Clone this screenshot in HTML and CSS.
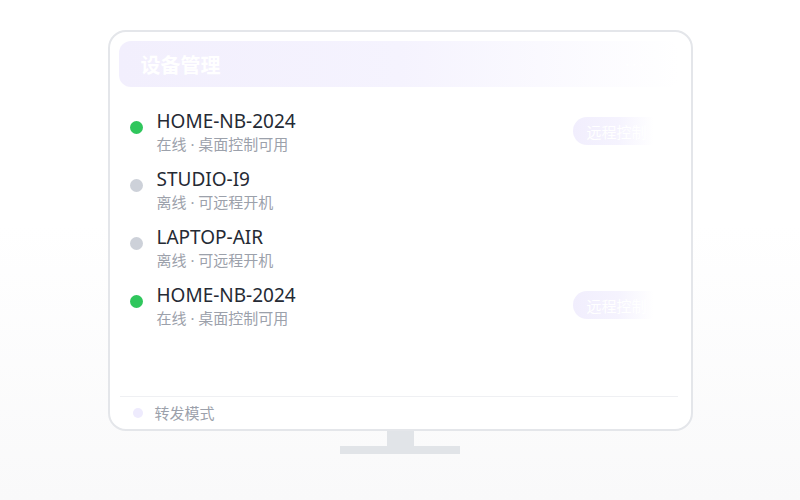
FILE: index.html
```
<!DOCTYPE html>
<html lang="zh-CN">
  <head>
    <meta charset="UTF-8" />
    <meta name="viewport" content="width=device-width, initial-scale=1.0" />
    <title>设备管理</title>
    <link rel="stylesheet" href="styles.css">
  </head>
  <body>
    <div class="monitor">
      <div class="screen">
        <div class="header">
          <span class="title">设备管理</span>
          <span class="more">···</span>
        </div>

        <div class="device-list">
          <div class="device">
            <span class="dot online"></span>
            <div class="info">
              <div class="name">HOME-NB-2024</div>
              <div class="status">在线 · 桌面控制可用</div>
            </div>
            <button class="remote-btn">远程控制</button>
          </div>
          <div class="device">
            <span class="dot"></span>
            <div class="info">
              <div class="name">STUDIO-I9</div>
              <div class="status">离线 · 可远程开机</div>
            </div>
          </div>
          <div class="device">
            <span class="dot"></span>
            <div class="info">
              <div class="name">LAPTOP-AIR</div>
              <div class="status">离线 · 可远程开机</div>
            </div>
          </div>
          <div class="device">
            <span class="dot online"></span>
            <div class="info">
              <div class="name">HOME-NB-2024</div>
              <div class="status">在线 · 桌面控制可用</div>
            </div>
            <button class="remote-btn">远程控制</button>
          </div>
        </div>

        <div class="footer">
          <span class="mode-dot"></span>
          <span>转发模式</span>
        </div>
      </div>
      <div class="neck"></div>
      <div class="base"></div>
    </div>
  </body>
</html>
```

FILE: styles.css
```
body {
  margin: 0;
  padding: 0;
  height: 500px;
  font-family: "Noto Sans", "Noto Sans CJK SC", sans-serif;
  background: linear-gradient(#ffffff 45%, #f9f9fa);
}

.monitor {
  display: flex;
  flex-direction: column;
  align-items: center;
  padding-top: 30px;
}

.screen {
  box-sizing: border-box;
  width: 585px;
  height: 401px;
  border: 2px solid #e4e6ea;
  border-radius: 18px;
  background-color: #fff;
  padding: 9px 11px 0 9px;
  display: flex;
  flex-direction: column;
}

.header {
  height: 46px;
  border-radius: 12px;
  background: linear-gradient(90deg, #f2effd 0%, #f5f3fe 50%, #ffffff 100%);
  display: flex;
  align-items: center;
  justify-content: space-between;
  padding: 0 34px 0 22px;
}

.title {
  color: #fff;
  font-size: 20px;
  font-weight: bold;
}

.more {
  color: #fff;
  font-size: 18px;
  letter-spacing: 2px;
}

.device-list {
  flex: 1;
  padding: 24px 17px 0 11px;
  display: flex;
  flex-direction: column;
  gap: 16px;
}

.device {
  display: flex;
  align-items: flex-start;
}

.dot {
  width: 13px;
  height: 13px;
  border-radius: 50%;
  background-color: #cdd1d9;
  margin-top: 10px;
  margin-right: 14px;
  flex-shrink: 0;
}

.dot.online {
  background-color: #2fc65c;
}

.info {
  flex: 1;
}

.name {
  font-size: 19px;
  line-height: 20px;
  color: #252a34;
}

.status {
  font-size: 15px;
  line-height: 18px;
  margin-top: 4px;
  color: #9ca1ab;
}

.remote-btn {
  margin-top: 6px;
  height: 28px;
  padding: 0 16px 0 13px;
  border: none;
  border-radius: 14px;
  background: linear-gradient(90deg, #f1eefd 0%, #f5f3fe 50%, #ffffff 90%);
  color: #fff;
  font-family: inherit;
  font-size: 15px;
  cursor: pointer;
}

.footer {
  margin-left: 1px;
  margin-right: 2px;
  border-top: 1px solid #eff0f3;
  padding: 7px 0 7px 13px;
  display: flex;
  align-items: center;
  gap: 12px;
  font-size: 15px;
  line-height: 18px;
  color: #9ca1ab;
}

.mode-dot {
  width: 10px;
  height: 10px;
  border-radius: 50%;
  background-color: #eeebfd;
}

.neck {
  width: 27px;
  height: 15px;
  background-color: #e1e4e8;
}

.base {
  width: 120px;
  height: 8px;
  background-color: #e1e4e8;
}
```
